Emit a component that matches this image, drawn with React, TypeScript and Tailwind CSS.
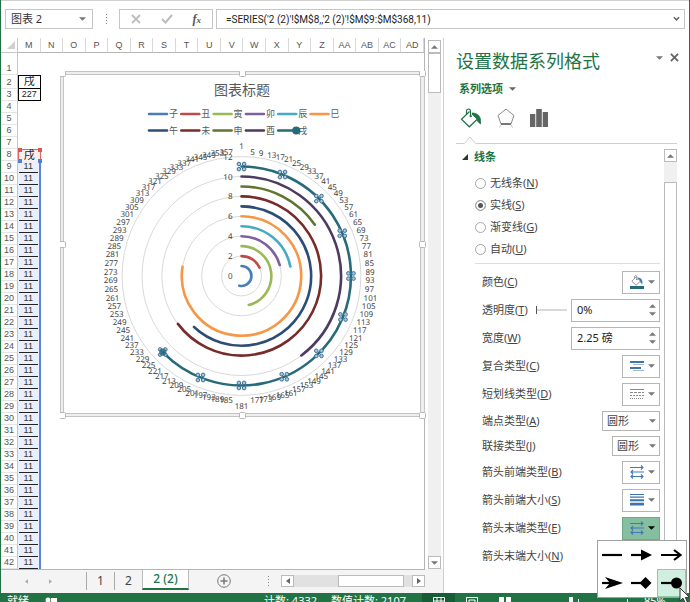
import React from 'react';

const columns = ['M', 'N', 'O', 'P', 'Q', 'R', 'S', 'T', 'U', 'V', 'W', 'X', 'Y', 'Z', 'AA', 'AB', 'AC', 'AD'];
const rows = Array.from({ length: 42 }, (_, i) => i + 1);

const UNIT = 9.95;

const series = [
  { name: '子', color: '#4a7ebb', end: 193 },
  { name: '丑', color: '#be4b48', end: 65 },
  { name: '寅', color: '#98b954', end: 166 },
  { name: '卯', color: '#7d60a0', end: 74 },
  { name: '辰', color: '#46aac5', end: 79 },
  { name: '巳', color: '#f79646', end: 279 },
  { name: '午', color: '#2c4d75', end: 223 },
  { name: '未', color: '#772c2a', end: 233 },
  { name: '申', color: '#5f7530', end: 55 },
  { name: '酉', color: '#4d3b62', end: 143 },
  { name: '戌', color: '#276a7c', end: 226 },
];

const polar = (r: number, deg: number) => {
  const a = (deg * Math.PI) / 180;
  return { x: r * Math.sin(a), y: -r * Math.cos(a) };
};

const arcPath = (r: number, end: number) => {
  const p = polar(r, end);
  return `M0 ${-r} A${r} ${r} 0 ${end > 180 ? 1 : 0} 1 ${p.x} ${p.y}`;
};

const Caret: React.FC<{ className?: string; up?: boolean }> = ({ className = 'text-[#777]', up }) => (
  <svg viewBox="0 0 8 4" className={`w-[7px] h-1 shrink-0 ${className}`} fill="currentColor">
    <path d={up ? 'M0 4h8L4 0z' : 'M0 0h8L4 4z'} />
  </svg>
);

const FormulaBar: React.FC = () => (
  <div className="flex items-center pt-2 pb-[9px] pl-1 pr-1 border-t border-[#d0d0d0]">
    <div className="flex items-center w-[88px] h-5 border border-[#c6c6c6] bg-white pr-[6px]">
      <input aria-label="名称框" defaultValue="图表 2" className="min-w-0 flex-1 pl-[5px] text-[11px] text-[#333] outline-none" />
      <button aria-label="展开名称"><Caret /></button>
    </div>
    <div className="w-[26px] flex flex-col items-center gap-[2px]">
      {[0, 1, 2, 3].map((i) => <i key={i} className="w-px h-px bg-[#888]" />)}
    </div>
    <div className="flex items-center justify-around w-[94px] h-5 border border-[#c6c6c6] px-[1px]">
      <button aria-label="取消">
        <svg viewBox="0 0 10 10" className="w-[10px] h-[10px]" stroke="#bcbcbc" strokeWidth="1.8"><path d="M1 1l8 8M9 1l-8 8" /></svg>
      </button>
      <button aria-label="输入">
        <svg viewBox="0 0 12 10" className="w-3 h-[10px]" stroke="#bcbcbc" strokeWidth="2" fill="none"><path d="M1 5l3.5 3.5L11 1" /></svg>
      </button>
      <button aria-label="插入函数" className="font-['Liberation_Serif',serif] italic font-bold text-[12px] leading-4 text-[#555]">
        f<span className="text-[9px]">x</span>
      </button>
    </div>
    <div className="flex items-center flex-1 h-5 ml-[3px] border border-[#c6c6c6] pr-1">
      <input
        aria-label="编辑栏"
        defaultValue="=SERIES('2 (2)'!$M$8,,'2 (2)'!$M$9:$M$368,11)"
        className="min-w-0 flex-1 pl-[9px] font-['Roboto','Liberation_Sans',sans-serif] text-[10px] text-[#222] outline-none"
      />
      <button aria-label="展开编辑栏">
        <svg viewBox="0 0 8 6" className="w-[7px] h-[6px]" stroke="#666" strokeWidth="1.8" fill="none"><path d="M1 1l3 3 3-3" /></svg>
      </button>
    </div>
  </div>
);

const DataCell: React.FC<{ row: number }> = ({ row }) => {
  if (row === 2 || row === 3) {
    return (
      <td className={`text-center p-0 border-black border-x border-b text-[#222] ${row === 2 ? 'border-t' : ''}`}>
        {row === 2 ? <span className="text-[11px]">戌</span> : '227'}
      </td>
    );
  }
  if (row === 8) {
    return (
      <td className="relative text-center p-0 bg-[#fdeeee] border-x border-t border-[#e06666] text-[11px] text-[#222]">
        戌
        <i className="absolute -top-[2px] -left-[1px] w-1 h-1 bg-[#d95757]" />
        <i className="absolute -top-[2px] -right-[2px] w-1 h-1 bg-[#d95757]" />
      </td>
    );
  }
  if (row > 8) {
    return (
      <td className="relative p-0 bg-[#e9effb] border-r-2 border-[#5b86e0] text-center text-[#333]">
        <div className="mx-px border-b border-[#222]">11</div>
        {row === 9 && (
          <>
            <i className="absolute -top-[2px] left-0 w-1 h-1 bg-[#4f7fdc]" />
            <i className="absolute -top-[2px] -right-[3px] w-1 h-1 bg-[#4f7fdc]" />
          </>
        )}
      </td>
    );
  }
  return <td className="p-0" />;
};

const SheetGrid: React.FC = () => (
  <table className="w-full h-full table-fixed border-separate border-spacing-0 font-['Liberation_Sans','Noto_Sans_CJK_SC',sans-serif] text-[9px] leading-[11px] border-r border-b border-[#b5b5b5]">
    <colgroup>
      <col className="w-[17px]" />
      {columns.map((c) => <col key={c} />)}
    </colgroup>
    <thead>
      <tr className="h-[15px] text-[#555]">
        <th className="p-0 border-b border-r border-[#c6c6c6]">
          <svg viewBox="0 0 8 8" className="w-2 h-2 ml-[6px]" fill="#d0d0d0"><path d="M8 0v8H0z" /></svg>
        </th>
        {columns.map((c) => (
          <th key={c} className="p-0 font-normal text-center border-b border-r border-b-[#b5b5b5] border-r-[#d8d8d8]">{c}</th>
        ))}
      </tr>
    </thead>
    <tbody>
      {rows.map((r) => (
        <tr key={r} className={r === 1 ? 'h-[22px]' : ''}>
          <th className="p-0 font-normal text-center align-bottom text-[#555] border-r border-b border-r-[#c6c6c6] border-b-[#e4e4e4]">{r}</th>
          <DataCell row={r} />
          <td colSpan={17} className="p-0" />
        </tr>
      ))}
    </tbody>
  </table>
);

// Four small circles drawn on every selected data point
const PointMarker: React.FC<{ deg: number }> = ({ deg }) => {
  const p = polar(11 * UNIT, deg);
  return (
    <g transform={`translate(${p.x} ${p.y})`} fill="#a9c6dc" stroke="#3d7196">
      <circle cx="-2.6" cy="-2.6" r="1.8" />
      <circle cx="2.6" cy="-2.6" r="1.8" />
      <circle cx="-2.6" cy="2.6" r="1.8" />
      <circle cx="2.6" cy="2.6" r="1.8" />
    </g>
  );
};

const CategoryLabel: React.FC<{ value: number }> = ({ value }) => {
  const deg = value - 1;
  if (deg % 180 === 0) {
    return <text x="0" y={deg === 0 ? -127 : 133} textAnchor="middle">{value}</text>;
  }
  const p = polar(124, deg);
  return <text x={p.x} y={p.y + 3} textAnchor={deg < 180 ? 'start' : 'end'}>{value}</text>;
};

const Chart: React.FC = () => (
  <svg viewBox="0 0 366 348" className="absolute left-[59px] top-[33px] w-[366px] h-[348px] font-['Noto_Sans','Noto_Sans_CJK_SC',sans-serif]">
    <rect x="2" y="2" width="361" height="342" fill="#fff" stroke="#eee" strokeWidth="4" />
    <rect x="0.5" y="0.5" width="364" height="345" fill="none" stroke="#c4c4c4" />
    <rect x="3.5" y="3.5" width="357" height="339" fill="none" stroke="#c4c4c4" />
    <text x="182" y="24" textAnchor="middle" fontSize="14" fill="#595959">图表标题</text>

    <g fontSize="9" fill="#595959">
      {series.map((s, i) => {
        const x = 89 + (i % 6) * 32.3;
        const y = i < 6 ? 43 : 59.5;
        return (
          <g key={s.name}>
            <path d={`M${x} ${y}h18`} stroke={s.color} strokeWidth="2.6" strokeLinecap="round" />
            {s.name === '戌' && <circle cx={x + 18} cy={y} r="4" fill={s.color} />}
            <text x={x + 20} y={y + 3}>{s.name}</text>
          </g>
        );
      })}
    </g>

    <g transform="translate(181.5 205)">
      <g fill="none" stroke="#d9d9d9">
        {[2, 4, 6, 8, 10, 12].map((n) => <circle key={n} r={n * UNIT} />)}
      </g>
      <g fill="none" strokeWidth="2.6" strokeLinecap="round">
        {series.map((s, i) => <path key={s.name} d={arcPath((i + 1) * UNIT, s.end)} stroke={s.color} />)}
      </g>
      {[0, 22, 45, 67, 90, 112, 135, 157, 180, 202, 226].map((d) => <PointMarker key={d} deg={d} />)}
      <circle cx={polar(11 * UNIT, 226).x} cy={polar(11 * UNIT, 226).y} r="3.6" fill="#276a7c" fillOpacity="0.8" />
      <g fontSize="8" fill="#444" textRendering="geometricPrecision">
        {[0, 2, 4, 6, 8, 10, 12].map((n) => <text key={n} x="-9" y={3 - n * UNIT} textAnchor="end">{n}</text>)}
        {Array.from({ length: 90 }, (_, i) => <CategoryLabel key={i} value={i * 4 + 1} />)}
      </g>
    </g>

    <g fill="#fff" stroke="#b8b8b8">
      {[2, 182, 362].map((x) =>
        [2, 173, 344].filter((y) => x !== 182 || y !== 173).map((y) => (
          <rect key={`${x}-${y}`} x={x - 2.5} y={y - 2.5} width="6" height="6" rx="1" />
        ))
      )}
    </g>
  </svg>
);

const SheetTabs: React.FC = () => (
  <div className="flex items-stretch h-6 shrink-0 bg-[#f4f4f4] font-['Noto_Sans',sans-serif] text-[12px] text-[#444]">
    <div className="flex items-center gap-[21px] w-[86px] pl-6 border-r border-[#aaa] my-[3px]">
      <button aria-label="上一个"><svg viewBox="0 0 4 6" className="w-[3px] h-[5px]" fill="#aaa"><path d="M4 0v6L0 3z" /></svg></button>
      <button aria-label="下一个"><svg viewBox="0 0 4 6" className="w-[3px] h-[5px]" fill="#aaa"><path d="M0 0v6l4-3z" /></svg></button>
    </div>
    <button className="w-7 my-[3px] border-r border-[#aaa] leading-4">1</button>
    <button className="w-[27px] leading-4">2</button>
    <button className="w-[47px] mb-[3px] bg-white border-x border-x-[#bbb] border-b-2 border-b-[#217346] font-medium text-[#217346] leading-4">2 (2)</button>
    <button aria-label="新工作表" className="ml-[28px]">
      <svg viewBox="0 0 14 14" className="w-[14px] h-[14px]" fill="none" stroke="#777"><circle cx="7" cy="7" r="6.3" /><path d="M7 3.5v7M3.5 7h7" strokeWidth="1.5" /></svg>
    </button>
    <div className="flex-1 flex items-center justify-end gap-3 pr-[18px]">
      <div className="flex flex-col gap-[2px]">
        {[0, 1, 2, 3].map((i) => <i key={i} className="w-px h-px bg-[#888]" />)}
      </div>
      <div className="flex w-[144px] h-3 bg-[#e1e1e1]">
        <button aria-label="向左滚动" className="w-[13px] flex items-center justify-center bg-white border border-[#bbb]">
          <svg viewBox="0 0 4 6" className="w-1 h-[6px]" fill="#666"><path d="M4 0v6L0 3z" /></svg>
        </button>
        <div className="w-[66px] ml-11 bg-white border border-[#bbb]" />
        <button aria-label="向右滚动" className="w-[13px] ml-auto flex items-center justify-center bg-white border border-[#bbb]">
          <svg viewBox="0 0 4 6" className="w-1 h-[6px]" fill="#666"><path d="M0 0v6l4-3z" /></svg>
        </button>
      </div>
    </div>
  </div>
);

const BucketIcon: React.FC<{ className: string; stroke: string; drop: string }> = ({ className, stroke, drop }) => (
  <svg viewBox="0 0 22 20" className={className} fill="none" stroke={stroke} strokeWidth="1.2">
    <path d="M9.5 3.5L1.5 11.2l7.8 7.6 8.2-7.8-5.5-5.3" />
    <path d="M6.5 6V3.2q0-2.2 2-2.2t2 2.2V9" />
    <path d="M10.5 7.5l.5 1.500" strokeWidth="2.2" />
    <path d="M12 5c4.5 0 8.5 2.500 8.5 7.500v3.500l-3.200-3 .2-2z" fill={drop} stroke={drop} strokeWidth="0.8" />
  </svg>
);

const CompoundIcon = () => (
  <svg viewBox="0 0 14 12" className="w-[14px] h-3">
    <path d="M0 1h14v2H0zM0 7h11v2H0z" fill="#3d74ad" />
    <path d="M3 4h11v1H3zM3 10h11v1H3z" fill="#a9b8c8" />
  </svg>
);

const DashIcon = () => (
  <svg viewBox="0 0 14 12" className="w-[14px] h-3" stroke="#8a8a8a">
    <path d="M0 1.5h14" />
    <path d="M0 4.5h14" strokeDasharray="3 1" />
    <path d="M0 7.5h14" strokeDasharray="2 1" />
    <path d="M0 10.5h14" strokeDasharray="1 1" />
  </svg>
);

const ArrowsIcon = () => (
  <svg viewBox="0 0 14 14" className="w-[14px] h-[14px]" fill="none" stroke="#4377b8" strokeWidth="1.1">
    <path d="M0 2.5h13M11 .5l2 2-2 2M14 7H1M3 5L1 7l2 2M1 11.5h12M11 9.5l2 2-2 2M3 9.5l-2 2 2 2" />
  </svg>
);

const WeightIcon = () => (
  <svg viewBox="0 0 14 12" className="w-[14px] h-3" fill="#3d74ad">
    <path d="M0 0h14v1H0zM0 2.5h14v1.300H0zM0 5.200h14v2H0zM0 8.700h14v2.800H0z" />
  </svg>
);

const DropButton: React.FC<{ label: string; open?: boolean; children: React.ReactNode }> = ({ label, open, children }) => (
  <button
    aria-label={label}
    className={`flex items-center justify-between w-[38px] h-[23px] pl-[7px] pr-1 border ${open ? 'bg-[#86bf9f] border-[#6fa98a]' : 'bg-white border-[#b5b5b5]'}`}
  >
    {children}
    <Caret className={open ? 'text-black' : 'text-[#777]'} />
  </button>
);

const Row: React.FC<{ label: string; hotkey: string; id?: string; short?: boolean; children?: React.ReactNode }> = ({ label, hotkey, id, short, children }) => (
  <div className={`relative flex items-center justify-between ${short ? 'h-[21px]' : 'h-6'}`}>
    <label htmlFor={id}>{label}(<u>{hotkey}</u>)</label>
    {children}
  </div>
);

const SpinBox: React.FC<{ id: string; value: string }> = ({ id, value }) => (
  <div className="flex w-[89px] h-[23px] border border-[#b5b5b5] bg-white">
    <input id={id} defaultValue={value} className="min-w-0 flex-1 pl-[5px] text-[#222] outline-none" />
    <div className="flex flex-col justify-around w-[13px] py-[2px]">
      <button aria-label="增加" className="flex justify-center"><Caret up /></button>
      <button aria-label="减少" className="flex justify-center"><Caret /></button>
    </div>
  </div>
);

const CapSelect: React.FC<{ id: string; className: string; options: string[] }> = ({ id, className, options }) => (
  <div className={`relative h-5 ${className}`}>
    <select id={id} className="appearance-none w-full h-full pl-1 border border-[#b5b5b5] bg-white leading-4">
      {options.map((o) => <option key={o}>{o}</option>)}
    </select>
    <Caret className="absolute right-1 top-2 text-[#777] pointer-events-none" />
  </div>
);

const arrowHeads = [
  { name: '无箭头', shape: <path d="M0 7h20" /> },
  { name: '三角箭头', shape: <><path d="M0 7h12" /><path d="M10 1.500l11 5.500-11 5.500z" fill="#000" stroke="none" /></> },
  { name: '开放型箭头', shape: <path d="M0 7h19M13 2l6.5 5L13 12" fill="none" /> },
  { name: '燕尾箭头', shape: <><path d="M0 7h10" /><path d="M3 1l18 6-18 6 5-6z" fill="#000" stroke="none" /></> },
  { name: '钻石形箭头', shape: <><path d="M0 7h12" /><path d="M14.5 1l6 6-6 6-6-6z" fill="#000" stroke="none" /></> },
  { name: '圆形箭头', shape: <><path d="M0 7h12" /><circle cx="15.5" cy="7" r="5.5" fill="#000" stroke="none" /></> },
];

const ArrowMenu: React.FC = () => (
  <div className="absolute z-20 top-full -right-[27px] w-[90px] grid grid-cols-3 bg-white border border-[#a0a0a0]">
    {arrowHeads.map((a) => (
      <button
        key={a.name}
        aria-label={a.name}
        className={`h-7 flex items-center justify-center border ${a.name === '圆形箭头' ? 'bg-[#d0efdf] border-[#93c9ab]' : 'border-transparent'}`}
      >
        <svg viewBox="0 0 21 14" className="w-[21px] h-[14px]" stroke="#000" strokeWidth="2.2">{a.shape}</svg>
      </button>
    ))}
    <svg viewBox="0 0 12 18" className="absolute left-[81px] top-[46px] w-3 h-[18px]" fill="#fff" stroke="#333">
      <path d="M1 1v13l3-2.800 2.200 5 2.300-1-2.200-4.800H10.500z" />
    </svg>
  </div>
);

const lineModes = [
  { label: '无线条', hotkey: 'N' },
  { label: '实线', hotkey: 'S' },
  { label: '渐变线', hotkey: 'G' },
  { label: '自动', hotkey: 'U' },
];

const FormatPane: React.FC = () => (
  <aside className="flex flex-col w-[246px] shrink-0 border-l border-[#d0d0d0] text-[11px] leading-4 text-[#444]">
    <div className="flex items-start justify-between pt-[9px] pl-3 pr-[10px]">
      <h2 className="text-[18px] leading-7 text-[#217346]">设置数据系列格式</h2>
      <div className="flex items-center gap-[7px] pt-[6px]">
        <button aria-label="任务窗格选项"><Caret /></button>
        <button aria-label="关闭">
          <svg viewBox="0 0 10 10" className="w-[9px] h-[9px]" stroke="#666" strokeWidth="2"><path d="M1 1l8 8M9 1l-8 8" /></svg>
        </button>
      </div>
    </div>
    <button className="flex items-center gap-[6px] mt-[6px] pl-[15px] font-bold text-[#217346]">
      系列选项 <Caret className="text-[#666]" />
    </button>
    <div className="flex items-center gap-[15px] mt-[11px] pl-4">
      <button aria-label="填充与线条"><BucketIcon className="w-[22px] h-5" stroke="#217346" drop="#217346" /></button>
      <button aria-label="效果">
        <svg viewBox="0 0 18 20" className="w-[18px] h-5" fill="none" stroke="#8a8a8a">
          <path d="M9 1l8 6.500-3 8.500H4L1 7.500z" />
          <path d="M4 16h10" strokeWidth="2" stroke="#777" />
          <path d="M4 17l-1.500 2.500M14 17l1.500 2.500" stroke="#bbb" />
        </svg>
      </button>
      <button aria-label="系列选项">
        <svg viewBox="0 0 18 18" className="w-[18px] h-[18px]" fill="#666"><path d="M0 5h5.300v13H0zM6.200 0h5.600v18H6.200zM12.700 3H18v15h-5.300z" /></svg>
      </button>
    </div>
    <div className="flex mt-2 pl-3 pr-3">
      <svg viewBox="0 0 30 8" className="w-[30px] h-2 shrink-0" fill="none" stroke="#cfcfcf"><path d="M0 7.5h8.500l5.500-6.500 5.500 6.500H30" /></svg>
      <div className="flex-1 border-b border-[#cfcfcf]" />
    </div>

    <div className="flex flex-1 min-h-0 mt-[5px] pr-3">
      <div className="flex-1 pr-1">
        <h3 className="flex items-center gap-[6px] pl-[18px] font-bold text-[#217346]">
          <svg viewBox="0 0 6 6" className="w-[6px] h-[6px]" fill="#333"><path d="M6 0v6H0z" /></svg>
          线条
        </h3>
        <div className="flex flex-col gap-[6px] mt-[10px] ml-[31px] pb-[6px] border-b border-[#dedede]">
          {lineModes.map((m) => (
            <label key={m.label} className="flex items-center gap-1">
              <input
                type="radio"
                name="line"
                defaultChecked={m.label === '实线'}
                className="appearance-none w-[11px] h-[11px] rounded-full border border-[#a5a5a5] bg-white checked:bg-[#555] checked:shadow-[inset_0_0_0_2px_#fff]"
              />
              <span>{m.label}(<u>{m.hotkey}</u>)</span>
            </label>
          ))}
        </div>
        <div className="flex flex-col gap-1 mt-[6px] pl-[38px]">
          <Row label="颜色" hotkey="C">
            <DropButton label="颜色">
              <span className="flex flex-col items-center w-[14px]">
                <BucketIcon className="w-3 h-[11px]" stroke="#666" drop="#3d74ad" />
                <i className="w-full h-[3px] bg-[#276a7c]" />
              </span>
            </DropButton>
          </Row>
          <Row label="透明度" hotkey="T" id="alpha">
            <span className="flex items-center gap-1">
              <input
                type="range"
                aria-label="透明度"
                defaultValue="0"
                className="appearance-none w-[31px] h-2 bg-linear-to-b from-transparent from-40% via-[#999] via-50% to-transparent to-60% [&::-webkit-slider-thumb]:appearance-none [&::-webkit-slider-thumb]:w-px [&::-webkit-slider-thumb]:h-2 [&::-webkit-slider-thumb]:bg-[#555]"
              />
              <SpinBox id="alpha" value="0%" />
            </span>
          </Row>
          <Row label="宽度" hotkey="W" id="width"><SpinBox id="width" value="2.25 磅" /></Row>
          <Row label="复合类型" hotkey="C"><DropButton label="复合类型"><CompoundIcon /></DropButton></Row>
          <Row label="短划线类型" hotkey="D"><DropButton label="短划线类型"><DashIcon /></DropButton></Row>
          <Row short label="端点类型" hotkey="A" id="cap"><CapSelect id="cap" className="w-[58px]" options={['圆形', '正方形', '平面']} /></Row>
          <Row short label="联接类型" hotkey="J" id="join"><CapSelect id="join" className="w-12" options={['圆形', '棱台', '斜接']} /></Row>
          <Row label="箭头前端类型" hotkey="B"><DropButton label="箭头前端类型"><ArrowsIcon /></DropButton></Row>
          <Row label="箭头前端大小" hotkey="S"><DropButton label="箭头前端大小"><WeightIcon /></DropButton></Row>
          <Row label="箭头末端类型" hotkey="E">
            <DropButton label="箭头末端类型" open><ArrowsIcon /></DropButton>
            <ArrowMenu />
          </Row>
          <Row label="箭头末端大小" hotkey="N" />
        </div>
      </div>
      <div className="flex flex-col w-[13px] bg-[#f0f0f0]">
        <button aria-label="向上滚动" className="flex items-center justify-center h-[13px] bg-white border border-[#bbb]"><Caret up /></button>
        <div className="flex-1 mt-5 bg-white border border-[#bbb]" />
      </div>
    </div>
  </aside>
);

const StatusBar: React.FC = () => (
  <footer className="flex h-[9px] shrink-0 overflow-hidden bg-[#217346] text-white text-[11px] leading-4 whitespace-nowrap">
    <span className="w-[44px] pl-[6px]">就绪</span>
    <svg viewBox="0 0 12 12" className="w-3 h-3 mt-1" fill="#fff"><circle cx="3" cy="3" r="2.5" /><path d="M6 1h6v9H1V7h5z" /></svg>
    <div className="flex-1 flex justify-end gap-[14px] pr-4">
      <span>计数: 4332</span>
      <span>数值计数: 2107</span>
    </div>
    <div className="flex w-[267px]">
      <span className="w-[33px] h-4 pl-[11px] pt-1 bg-[#175c36]">
        <svg viewBox="0 0 12 12" className="w-3 h-3" fill="none" stroke="#fff"><path d="M.5.5h11v11H.5zM.5 4h11M4 .5v11M8 .5v11" /></svg>
      </span>
      <svg viewBox="0 0 12 12" className="w-3 h-3 mt-1 ml-[11px]" fill="none" stroke="#fff"><path d="M.5.5h11v11H.5zM3 3h6v6H3z" /></svg>
      <svg viewBox="0 0 12 12" className="w-3 h-3 mt-1 ml-[21px]" fill="#fff"><path d="M0 0h5v12H0zM7 0h5v6H7z" /></svg>
      <i className="w-1 h-[10px] mt-1 ml-[58px] bg-white" />
      <i className="w-px h-[6px] mt-[6px] ml-[5px] bg-white" />
      <i className="w-px h-2 mt-[6px] ml-12 bg-white" />
      <span className="ml-4">85%</span>
    </div>
  </footer>
);

const App: React.FC = () => {
  return (
    <div className="flex flex-col h-screen overflow-hidden border-x border-[#217346] bg-white font-['Noto_Sans','Noto_Sans_CJK_SC',sans-serif]">
      <FormulaBar />
      <div className="flex flex-1 min-h-0">
        <main className="flex flex-col flex-1 min-w-0">
          <div className="flex flex-1 min-h-0">
            <div className="relative flex-1 min-w-0">
              <SheetGrid />
              <Chart />
            </div>
            <div className="flex flex-col w-[13px] mt-[2px] ml-[3px] mr-[2px] bg-[#f0f0f0]">
              <button aria-label="向上滚动" className="flex items-center justify-center h-[13px] bg-white border border-[#bbb]"><Caret up /></button>
              <div className="h-10 bg-white border border-[#bbb]" />
              <button aria-label="向下滚动" className="flex items-center justify-center h-[13px] mt-auto bg-white border border-[#bbb]"><Caret /></button>
            </div>
          </div>
          <SheetTabs />
        </main>
        <FormatPane />
      </div>
      <StatusBar />
    </div>
  );
};

export default App;
